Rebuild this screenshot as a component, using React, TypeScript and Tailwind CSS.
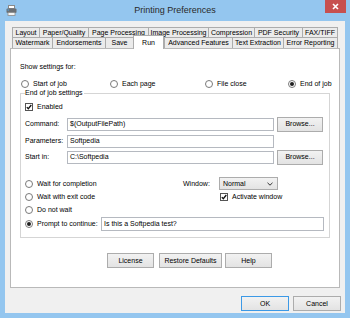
import React from "react";

const row1: [string, number][] = [
  ["Layout", 27],
  ["Paper/Quality", 49],
  ["Page Processing", 60],
  ["Image Processing", 60],
  ["Compression", 46],
  ["PDF Security", 48],
  ["FAX/TIFF", 36],
];

const row2: [string, number][] = [
  ["Watermark", 40],
  ["Endorsements", 53],
  ["Save", 28],
  ["Run", 31],
  ["Advanced Features", 68],
  ["Text Extraction", 51],
  ["Error Reporting", 55],
];

function Radio({ checked, label }: { checked?: boolean; label: string }) {
  return (
    <div className="flex items-center gap-[4px] h-[8px]">
      <span className="w-[8px] h-[8px] rounded-full border border-[#7a7a7a] bg-white flex items-center justify-center shrink-0">
        {checked && <span className="w-[4px] h-[4px] rounded-full bg-[#1f1f1f]" />}
      </span>
      <span className="whitespace-nowrap">{label}</span>
    </div>
  );
}

function Check({ label }: { label: string }) {
  return (
    <div className="flex items-center gap-[4px] h-[8px]">
      <span className="w-[8px] h-[8px] border border-[#555] bg-white flex items-center justify-center shrink-0">
        <svg width="6" height="6" viewBox="0 0 6 6">
          <path d="M0.8 3.1 L2.3 4.7 L5.3 1" fill="none" stroke="#111" strokeWidth="1.3" />
        </svg>
      </span>
      <span className="whitespace-nowrap">{label}</span>
    </div>
  );
}

function Btn({ label, w, primary }: { label: string; w: string; primary?: boolean }) {
  return (
    <div
      className={`${w} h-[15px] flex items-center justify-center border bg-linear-to-b from-[#f2f2f2] to-[#e3e3e3] ${
        primary ? "border-[#3c99e6]" : "border-[#acacac]"
      }`}
    >
      {label}
    </div>
  );
}

function Input({ value, w }: { value: string; w: string }) {
  return (
    <div className={`${w} h-[13px] border border-[#b5b9c0] bg-white flex items-center px-[2px] whitespace-nowrap`}>
      {value}
    </div>
  );
}

export default function App() {
  return (
    <div className="w-[350px] h-[318px] bg-[#94c6ef] flex flex-col font-['Liberation_Sans',Arial,sans-serif] text-[7px] leading-[8px] text-black">
      {/* title bar */}
      <div className="h-[21px] flex items-center relative">
        <svg className="ml-[6px]" width="11" height="11" viewBox="0 0 11 11">
          <rect x="2.5" y="0.5" width="6" height="3" fill="#fff" stroke="#8a8a8a" />
          <rect x="0.5" y="3.5" width="10" height="4.5" rx="1" fill="#6b6f74" />
          <rect x="2" y="7.5" width="7" height="3" fill="#f4f4f4" stroke="#8a8a8a" strokeWidth="0.8" />
          <rect x="1.5" y="4.5" width="1.5" height="1" fill="#4aa8e8" />
        </svg>
        <div className="flex-1 text-center text-[9px] leading-[10px] text-[#2a2a2a] -ml-[17px] pb-[1px]">Printing Preferences</div>
        <div className="absolute right-[4px] top-0 w-[21px] h-[13px] bg-[#c7504f] flex items-center justify-center">
          <svg width="7" height="7" viewBox="0 0 7 7">
            <path d="M1 1 L6 6 M6 1 L1 6" stroke="#fff" strokeWidth="1.6" />
          </svg>
        </div>
      </div>

      {/* client */}
      <div className="mx-[5px] h-[292px] bg-[#f0f0f0] flex flex-col px-[5px] pt-[6px]">
        {/* tabs */}
        <div className="flex mx-[2px] h-[10px]">
          {row1.map(([t, w], i) => (
            <div
              key={t}
              style={{ width: w }}
              className={`h-[10px] shrink-0 border-t border-l border-[#acacac] bg-[#ebebeb] flex items-center justify-center whitespace-nowrap ${
                i === row1.length - 1 ? "border-r" : ""
              }`}
            >
              {t}
            </div>
          ))}
        </div>
        <div className="flex items-end mx-[2px] h-[13px] -mt-[2px]">
          {row2.map(([t, w], i) =>
            t === "Run" ? (
              <div
                key={t}
                style={{ width: w }}
                className="relative z-10 h-[14px] -mb-[1px] shrink-0 border-t border-l border-r border-[#acacac] bg-white flex items-center justify-center"
              >
                {t}
              </div>
            ) : (
              <div
                key={t}
                style={{ width: w }}
                className={`h-[11px] shrink-0 border-t border-l border-[#acacac] bg-[#ebebeb] flex items-center justify-center whitespace-nowrap ${
                  i === row2.length - 1 ? "border-r" : ""
                }`}
              >
                {t}
              </div>
            )
          )}
        </div>

        {/* panel */}
        <div className="h-[240px] bg-white border border-[#b9b9b9] flex flex-col">
          <div className="mt-[14px] pl-[9px]">Show settings for:</div>
          <div className="mt-[9px] pl-[10px] flex">
            <div className="w-[89px]">
              <Radio label="Start of job" />
            </div>
            <div className="w-[95px]">
              <Radio label="Each page" />
            </div>
            <div className="w-[83px]">
              <Radio label="File close" />
            </div>
            <Radio checked label="End of job" />
          </div>

          {/* group box */}
          <div className="relative mt-[5px] mx-[9px] border border-[#d5d5d5] flex flex-col pl-[4px] pb-[6px]">
            <span className="absolute left-[4px] -top-[5px] bg-white pr-[1px]">End of job settings</span>
            <div className="mt-[9px]">
              <Check label="Enabled" />
            </div>
            <div className="mt-[6px] flex items-center h-[14px]">
              <span className="w-[42px]">Command:</span>
              <Input w="w-[207px]" value="$(OutputFilePath)" />
              <div className="ml-[3px]">
                <Btn w="w-[46px]" label="Browse..." />
              </div>
            </div>
            <div className="mt-[3px] flex items-center h-[14px]">
              <span className="w-[42px]">Parameters:</span>
              <Input w="w-[207px]" value="Softpedia" />
            </div>
            <div className="mt-[2px] flex items-center h-[14px]">
              <span className="w-[42px]">Start in:</span>
              <Input w="w-[207px]" value="C:\Softpedia" />
              <div className="ml-[3px]">
                <Btn w="w-[46px]" label="Browse..." />
              </div>
            </div>

            <div className="mt-[13px] flex items-center h-[13px]">
              <div className="w-[158px]">
                <Radio label="Wait for completion" />
              </div>
              <span className="w-[36px]">Window:</span>
              <div className="w-[59px] h-[13px] border border-[#acacac] bg-linear-to-b from-[#f2f2f2] to-[#e3e3e3] flex items-center justify-between pl-[3px] pr-[4px]">
                <span>Normal</span>
                <svg width="6" height="4" viewBox="0 0 6 4">
                  <path d="M0.5 0.8 L3 3.2 L5.5 0.8" fill="none" stroke="#333" strokeWidth="1" />
                </svg>
              </div>
            </div>
            <div className="flex items-center h-[13px]">
              <div className="w-[158px]">
                <Radio label="Wait with exit code" />
              </div>
              <div className="ml-[37px]">
                <Check label="Activate window" />
              </div>
            </div>
            <div className="flex items-center h-[13px]">
              <Radio label="Do not wait" />
            </div>
            <div className="mt-[1px] flex items-center h-[14px]">
              <div className="w-[76px]">
                <Radio checked label="Prompt to continue:" />
              </div>
              <div className="w-[223px] h-[14px] border border-[#b5b9c0] bg-white flex items-center px-[2px]">
                Is this a Softpedia test?
              </div>
            </div>
          </div>

          <div className="mt-[15px] flex pl-[96px]">
            <Btn w="w-[47px]" label="License" />
            <div className="ml-[5px]">
              <Btn w="w-[63px]" label="Restore Defaults" />
            </div>
            <div className="ml-[3px]">
              <Btn w="w-[47px]" label="Help" />
            </div>
          </div>
        </div>

        <div className="mt-[8px] flex justify-end gap-[4px] -mr-[1px]">
          <Btn w="w-[48px]" label="OK" primary />
          <Btn w="w-[48px]" label="Cancel" />
        </div>
      </div>
    </div>
  );
}
